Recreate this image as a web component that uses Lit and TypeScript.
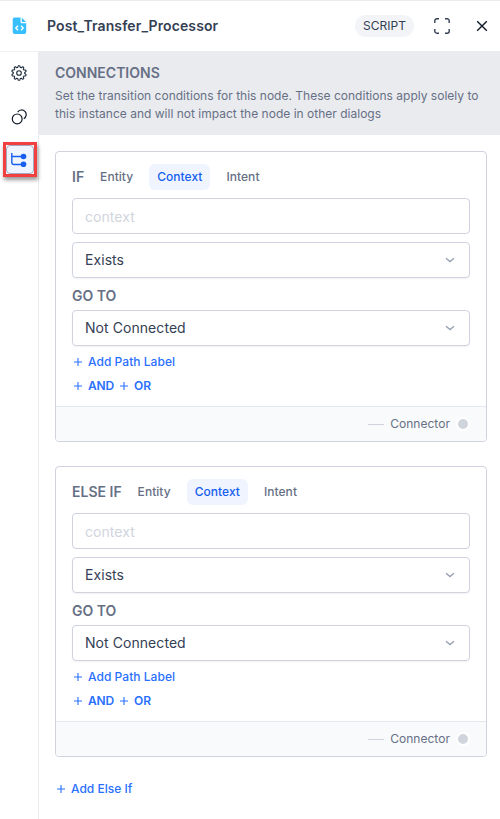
import { LitElement, html, css, svg } from "lit";
import { customElement, property } from "lit/decorators.js";
import { classMap } from "lit/directives/class-map.js";

const plus = html`<svg class="plus" width="12" height="12" viewBox="0 0 12 12" fill="none">
  <path d="M6 2v8M2 6h8" stroke="currentColor" stroke-width="1.1" />
</svg>`;

const chevron = html`<svg width="12" height="12" viewBox="0 0 12 12" fill="none">
  <path d="M2 4.2l4 3.4 4-3.4" stroke="#98a2b3" stroke-width="1.4" />
</svg>`;

/** Outline of a gear with ten rounded teeth. */
const gearPath = (() => {
  const steps = 120;
  const points: string[] = [];
  for (let i = 0; i < steps; i++) {
    const a = (i / steps) * Math.PI * 2;
    const wave = Math.max(-1, Math.min(1, Math.cos(a * 10) * 1.6));
    const r = 6.5 + wave * 0.8;
    points.push(`${(8 + r * Math.sin(a)).toFixed(2)} ${(8 - r * Math.cos(a)).toFixed(2)}`);
  }
  return `M${points.join("L")}Z`;
})();

@customElement("condition-card")
export class ConditionCard extends LitElement {
  @property() keyword = "IF";
  @property() active = "Context";

  static styles = css`
    :host {
      display: block;
      box-sizing: border-box;
      height: 291px;
      border: 1px solid #d0d2df;
      border-radius: 4px;
      overflow: hidden;
      background: #fff;
    }
    .body {
      box-sizing: border-box;
      height: 254px;
      padding: 12px 16px 0;
    }
    .tabs {
      display: flex;
      align-items: center;
      height: 26px;
      margin-bottom: 8px;
    }
    .keyword,
    .goto {
      font-size: 14px;
      font-weight: 600;
      color: #667085;
    }
    .keyword {
      height: 26px;
      line-height: 25px;
      margin-right: 8px;
    }
    .tab {
      height: 26px;
      line-height: 26px;
      padding: 0 8px;
      margin-right: 8px;
      border-radius: 6px;
      font-size: 12px;
      letter-spacing: 0.04px;
      font-weight: 500;
      color: #667085;
    }
    .on {
      background: #eff4ff;
      color: #155eef;
    }
    .field {
      box-sizing: border-box;
      display: flex;
      align-items: center;
      justify-content: space-between;
      height: 36px;
      padding: 0 13px 0 12px;
      border: 1px solid #d0d2df;
      border-radius: 4px;
      font-size: 14px;
      line-height: 18px;
      letter-spacing: 0.06px;
      color: #344054;
    }
    .placeholder {
      padding-top: 1px;
      color: #d0d5dd;
      margin-bottom: 8px;
    }
    .select {
      box-shadow: 0 1px 2px rgba(16, 24, 40, 0.06);
    }
    .goto {
      height: 32px;
      line-height: 36px;
    }
    .actions {
      display: flex;
      align-items: center;
      height: 24px;
      font-size: 12px;
      line-height: 16px;
      font-weight: 500;
      color: #2970ff;
    }
    .path {
      margin-top: 4px;
    }
    .path span {
      letter-spacing: 0.04px;
    }
    .strong {
      font-weight: 600;
    }
    .strong span {
      letter-spacing: -0.15px;
    }
    .plus {
      margin-right: 4px;
    }
    .strong .plus + span {
      margin-right: 4px;
    }
    .footer {
      box-sizing: border-box;
      display: flex;
      align-items: center;
      justify-content: flex-end;
      height: 35px;
      padding-right: 16px;
      border-top: 1px solid #e4e7ec;
      background: #f9fafb;
      font-size: 12px;
      line-height: 16px;
      letter-spacing: 0.04px;
      color: #667085;
    }
    .line {
      width: 16px;
      height: 1px;
      margin-right: 6px;
      background: #d0d5dd;
    }
    .dot {
      width: 10px;
      height: 10px;
      margin-left: 6px;
      border: 2px solid #fff;
      border-radius: 50%;
      background: #d0d5dd;
    }
  `;

  render() {
    return html`
      <div class="body">
        <div class="tabs">
          <span class="keyword">${this.keyword}</span>
          ${["Entity", "Context", "Intent"].map(
            (t) => html`<span class=${classMap({ tab: true, on: t === this.active })}>${t}</span>`
          )}
        </div>
        <div class="field placeholder">context</div>
        <div class="field select"><span>Exists</span>${chevron}</div>
        <div class="goto">GO TO</div>
        <div class="field select"><span>Not Connected</span>${chevron}</div>
        <div class="actions path">${plus}<span>Add Path Label</span></div>
        <div class="actions strong">${plus}<span>AND</span>${plus}<span>OR</span></div>
      </div>
      <div class="footer">
        <span class="line"></span><span>Connector</span><span class="dot"></span>
      </div>
    `;
  }
}

@customElement("app-root")
export class AppRoot extends LitElement {
  static styles = css`
    :host {
      display: flex;
      flex-direction: column;
      box-sizing: border-box;
      height: 819px;
      overflow: hidden;
      border-top: 1px solid #ededee;
      background: #fff;
      font-family: Inter, sans-serif;
    }
    svg {
      display: block;
      flex: none;
    }
    header {
      box-sizing: border-box;
      display: flex;
      align-items: center;
      height: 50px;
      padding: 0 12px;
    }
    .title {
      flex: 1;
      margin-left: 20px;
      margin-top: -1px;
      font-size: 14px;
      letter-spacing: 0.11px;
      font-weight: 600;
      color: #344054;
    }
    .badge {
      width: 59px;
      height: 22px;
      line-height: 22px;
      border-radius: 11px;
      background: #f2f4f7;
      text-align: center;
      font-size: 12px;
      color: #344054;
    }
    .expand {
      margin-left: 20px;
    }
    .close {
      margin: 0 0 0 26px;
    }
    .main {
      display: flex;
      flex: 1;
      min-height: 0;
    }
    nav {
      flex: none;
      box-sizing: border-box;
      width: 39px;
      padding-top: 13px;
      border-top: 1px solid #eef0f3;
      border-right: 1px solid #eaecf0;
      display: flex;
      flex-direction: column;
      align-items: center;
    }
    .circles {
      margin-top: 28px;
    }
    .marked {
      box-sizing: border-box;
      width: 34px;
      height: 35px;
      margin: 17px 0 0 2px;
      border: 3px solid #f23f3f;
      background: #fff;
      box-shadow: 1px 3px 4px rgba(0, 0, 0, 0.4);
    }
    .active {
      box-sizing: border-box;
      display: grid;
      place-items: center;
      width: 28px;
      height: 29px;
      padding-right: 2px;
      border: 1px solid #a3a9bd;
      border-radius: 4px;
      background: #eff4ff;
    }
    .content {
      flex: 1;
      min-width: 0;
    }
    .banner {
      box-sizing: border-box;
      height: 84px;
      padding: 12px 16px 0 17px;
      margin-left: -1px;
      background: #eaebef;
      color: #667085;
    }
    .heading {
      font-size: 14px;
      line-height: 20px;
      font-weight: 600;
    }
    .text {
      margin-top: 4px;
      font-size: 12px;
      line-height: 18px;
      letter-spacing: 0.01px;
      white-space: nowrap;
    }
    .cards {
      display: flex;
      flex-direction: column;
      gap: 24px;
      padding: 16px 13px 0 16px;
    }
    .add {
      display: flex;
      align-items: center;
      gap: 4px;
      height: 16px;
      font-size: 12px;
      line-height: 16px;
      font-weight: 500;
      color: #2970ff;
    }
  `;

  render() {
    return html`
      <header>
        <svg width="15" height="18" viewBox="0 0 15 18">
          <path d="M2.5.5h6v4.2c0 .9.6 1.5 1.5 1.5h4.2v8.8a2 2 0 0 1-2 2H2.7a2 2 0 0 1-2-2V2.5a2 2 0 0 1 1.8-2z" fill="#36bffa" />
          <path d="M9.8.7l4.2 4.2h-3.5a.7.7 0 0 1-.7-.7z" fill="#36bffa" />
          <path d="M6 8.8L3.8 11 6 13.2M9 8.8l2.2 2.2L9 13.2" fill="none" stroke="#fff" stroke-width="1.4" />
        </svg>
        <span class="title">Post_Transfer_Processor</span>
        <span class="badge">SCRIPT</span>
        <svg class="expand" width="16" height="16" viewBox="0 0 16 16" fill="none" stroke="#344054" stroke-width="1.4">
          <path d="M.8 5V2.8a2 2 0 0 1 2-2H5M11 .8h2.2a2 2 0 0 1 2 2V5M15.2 11v2.2a2 2 0 0 1-2 2H11M5 15.2H2.8a2 2 0 0 1-2-2V11" />
        </svg>
        <svg class="close" width="12" height="12" viewBox="0 0 12 12" fill="none">
          <path d="M1.2 1.2l9.6 9.6M10.8 1.2l-9.6 9.6" stroke="#101828" stroke-width="1.4" />
        </svg>
      </header>
      <div class="main">
        <nav>
          <svg width="16" height="16" viewBox="0 0 16 16" fill="none" stroke="#1d2939" stroke-width="1.1">
            ${svg`<path d=${gearPath} />`}
            <circle cx="8" cy="8" r="2.3" />
          </svg>
          <svg class="circles" width="16" height="16" viewBox="0 0 16 16" fill="none" stroke="#101828" stroke-width="1.2">
            <circle cx="6.2" cy="9.9" r="4.9" />
            <path d="M6.7 3.1a4.6 4.6 0 1 1 6.1 6.5" />
          </svg>
          <div class="marked">
            <div class="active">
              <svg width="16" height="16" viewBox="0 0 16 16">
                <path d="M.8 1v9.5a2 2 0 0 0 2 2H12M.8 4.5H12" fill="none" stroke="#155eef" stroke-width="1.4" />
                <circle cx="12.5" cy="4.5" r="2.8" fill="#155eef" />
                <circle cx="12.5" cy="12.3" r="2.8" fill="#155eef" />
              </svg>
            </div>
          </div>
        </nav>
        <div class="content">
          <div class="banner">
            <div class="heading">CONNECTIONS</div>
            <div class="text">
              Set the transition conditions for this node. These conditions apply solely to<br />this
              instance and will not impact the node in other dialogs
            </div>
          </div>
          <div class="cards">
            <condition-card keyword="IF"></condition-card>
            <condition-card keyword="ELSE IF"></condition-card>
            <div class="add">
              ${plus}<span>Add Else If</span>
            </div>
          </div>
        </div>
      </div>
    `;
  }
}
